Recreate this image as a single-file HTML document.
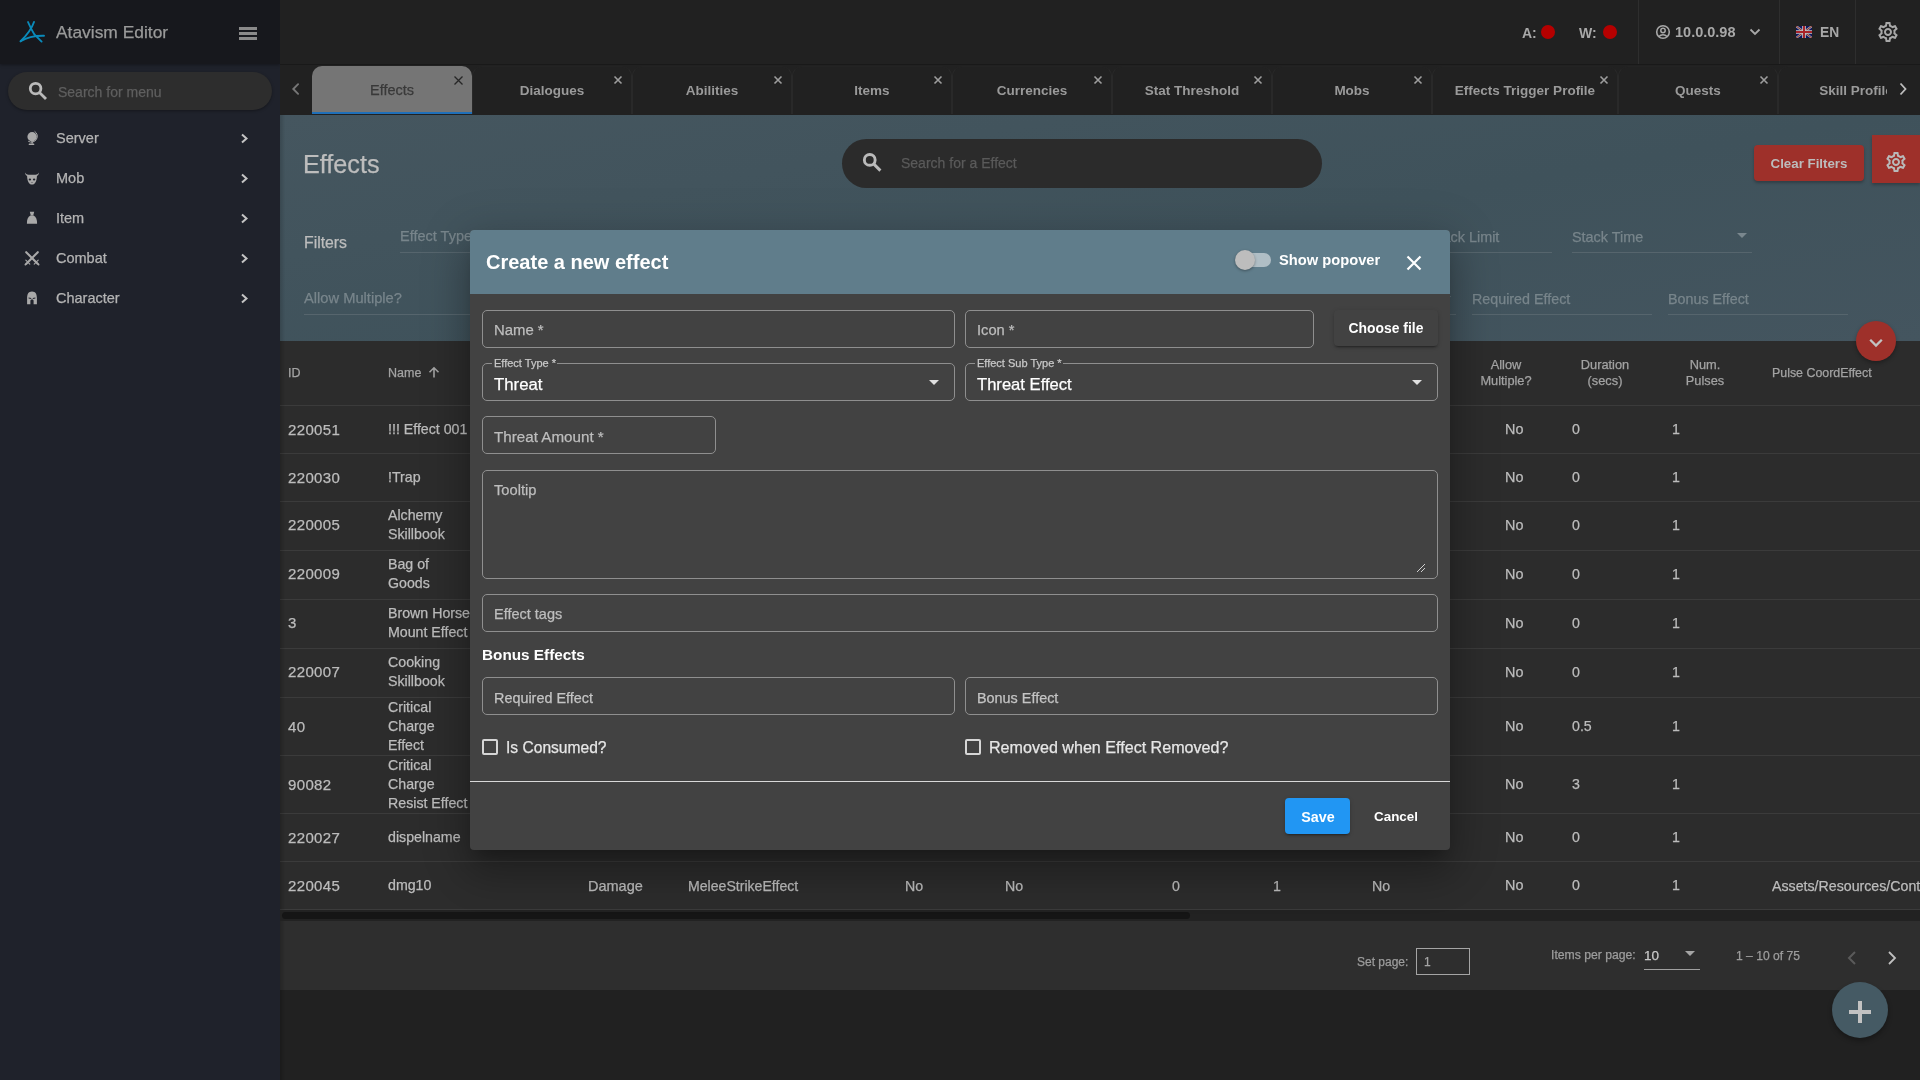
<!DOCTYPE html><html><head><meta charset="utf-8"><style>*{box-sizing:border-box;margin:0;padding:0}
html,body{width:1920px;height:1080px;overflow:hidden;background:#212121;font-family:"Liberation Sans",sans-serif}
.a{position:absolute}
.t{position:absolute;line-height:1;white-space:nowrap;will-change:transform;-webkit-text-stroke-width:.25px}
.t[style*="font-weight:700"]{-webkit-text-stroke-width:0}
</style></head><body><div class="a" style="left:0px;top:0px;width:280px;height:1080px;background:#1f222b"></div>
<div class="a" style="left:0px;top:0px;width:280px;height:64px;background:#17181d;box-shadow:0 1px 3px rgba(0,0,0,.35)"></div>
<svg class="a" style="left:16px;top:16px" width="32" height="32" viewBox="0 0 32 32"><g fill="none" stroke="#0a8aba" stroke-width="1.9" stroke-linecap="round"><path d="M12 6 Q 15 13 18.4 18.4 L 25.6 25.6"/><path d="M18 6 Q 15 15 4.6 25.2"/><path d="M4.6 25.2 Q 14 19.4 28 19.7"/></g></svg>
<div class="t" style="left:56px;top:24.47px;font-size:17.4px;color:#9a9a9a;font-weight:400;">Atavism Editor</div>
<div class="a" style="left:239px;top:27.2px;width:18.2px;height:2.5px;background:#8a8a8a"></div>
<div class="a" style="left:239px;top:32.2px;width:18.2px;height:2.5px;background:#8a8a8a"></div>
<div class="a" style="left:239px;top:37.2px;width:18.2px;height:2.5px;background:#8a8a8a"></div>
<div class="a" style="left:8px;top:71.5px;width:264px;height:38.5px;background:#2d2d2d;border-radius:20px;box-shadow:0 1px 3px rgba(0,0,0,.35)"></div>
<svg class="a" style="left:27px;top:80px" width="22" height="22" viewBox="0 0 22 22"><circle cx="8.6" cy="8.6" r="5.3" fill="none" stroke="#bababa" stroke-width="2.8"/><path d="M12.2 12.2 L19 19" stroke="#bababa" stroke-width="2.8"/></svg>
<div class="t" style="left:58.3px;top:85.15px;font-size:14px;color:#5f5f5f;font-weight:400;">Search for menu</div>
<div class="t" style="left:56px;top:130.73px;font-size:14.5px;color:#b4b4b4;font-weight:400;">Server</div>
<svg class="a" style="left:240px;top:133px" width="9" height="11" viewBox="0 0 9 11"><path d="M2 1.5 L6.5 5.5 L2 9.5" fill="none" stroke="#c4c4c4" stroke-width="2"/></svg>
<div class="t" style="left:56px;top:170.73px;font-size:14.5px;color:#b4b4b4;font-weight:400;">Mob</div>
<svg class="a" style="left:240px;top:173px" width="9" height="11" viewBox="0 0 9 11"><path d="M2 1.5 L6.5 5.5 L2 9.5" fill="none" stroke="#c4c4c4" stroke-width="2"/></svg>
<div class="t" style="left:56px;top:210.73px;font-size:14.5px;color:#b4b4b4;font-weight:400;">Item</div>
<svg class="a" style="left:240px;top:213px" width="9" height="11" viewBox="0 0 9 11"><path d="M2 1.5 L6.5 5.5 L2 9.5" fill="none" stroke="#c4c4c4" stroke-width="2"/></svg>
<div class="t" style="left:56px;top:250.73px;font-size:14.5px;color:#b4b4b4;font-weight:400;">Combat</div>
<svg class="a" style="left:240px;top:253px" width="9" height="11" viewBox="0 0 9 11"><path d="M2 1.5 L6.5 5.5 L2 9.5" fill="none" stroke="#c4c4c4" stroke-width="2"/></svg>
<div class="t" style="left:56px;top:290.73px;font-size:14.5px;color:#b4b4b4;font-weight:400;">Character</div>
<svg class="a" style="left:240px;top:293px" width="9" height="11" viewBox="0 0 9 11"><path d="M2 1.5 L6.5 5.5 L2 9.5" fill="none" stroke="#c4c4c4" stroke-width="2"/></svg>
<svg class="a" style="left:24px;top:128px" width="16" height="18" viewBox="0 0 16 18"><circle cx="8.1" cy="8.7" r="4.7" fill="#a9a9a9"/><path d="M10.6 3.3 A5.6 5.6 0 0 1 4.2 13.2" fill="none" stroke="#a9a9a9" stroke-width="1"/><rect x="7.5" y="13" width="1.3" height="2.6" fill="#a9a9a9"/><rect x="4.7" y="15.6" width="5.6" height="1.5" rx=".7" fill="#a9a9a9"/></svg>
<svg class="a" style="left:24px;top:171px" width="16" height="15" viewBox="0 0 16 15"><path d="M1 1.6 C1.3 4.2 2.6 5.3 4.2 5.3 L11.8 5.3 C13.4 5.3 14.7 4.2 15 1.6 C14 3.2 12.9 3.8 11.6 3.8 L4.4 3.8 C3.1 3.8 2 3.2 1 1.6 Z" fill="#a9a9a9"/><path d="M3.1 4.2 C3 9.5 4.8 13.6 8 13.6 C11.2 13.6 13 9.5 12.9 4.2 Z" fill="#a9a9a9"/><ellipse cx="5.9" cy="8.6" rx="1.2" ry="1" fill="#1f222b"/><ellipse cx="10.1" cy="8.6" rx="1.2" ry="1" fill="#1f222b"/><path d="M7.4 11 L8.6 11 L8 11.9 Z" fill="#1f222b"/></svg>
<svg class="a" style="left:26px;top:211px" width="12" height="14" viewBox="0 0 12 14"><path d="M3.8 0.8 L8.2 0.8 L7.2 4.6 L4.8 4.6 Z" fill="#a9a9a9"/><path d="M4.4 4.6 L7.6 4.6 C10.2 5.8 11.1 8.6 11.1 12.8 L0.9 12.8 C0.9 8.6 1.8 5.8 4.4 4.6 Z" fill="#a9a9a9"/></svg>
<svg class="a" style="left:24px;top:250px" width="16" height="16" viewBox="0 0 16 16"><g stroke="#a9a9a9" stroke-linecap="round"><path d="M2.6 13.4 L13.8 2.2" stroke-width="2.1"/><path d="M13.4 13.4 L2.2 2.2" stroke-width="2.1"/><path d="M1.8 10.2 L5.8 14.2 M10.2 14.2 L14.2 10.2" stroke-width="1.1"/><path d="M1.4 14.6 L2.4 13.6 M14.6 14.6 L13.6 13.6" stroke-width="1.8"/></g></svg>
<svg class="a" style="left:26px;top:290px" width="12" height="16" viewBox="0 0 12 16"><path d="M6 1.5 C9.6 1.5 10.9 4.3 10.9 8 L10.9 14.2 L7.6 14.2 L7.6 10.6 L6.9 9.6 L5.1 9.6 L4.4 10.6 L4.4 14.2 L1.1 14.2 L1.1 8 C1.1 4.3 2.4 1.5 6 1.5 Z" fill="#a9a9a9"/><path d="M2.6 7.4 L5.2 7.9 L5.2 9 L2.6 8.6 Z M9.4 7.4 L6.8 7.9 L6.8 9 L9.4 8.6 Z" fill="#1f222b"/></svg>
<div class="a" style="left:280px;top:0px;width:1640px;height:64px;background:#212121"></div>
<div class="a" style="left:280px;top:64px;width:1640px;height:1px;background:#191919"></div>
<div class="a" style="left:1638px;top:0px;width:1px;height:64px;background:#2e2e2e"></div>
<div class="a" style="left:1779px;top:0px;width:1px;height:64px;background:#2e2e2e"></div>
<div class="a" style="left:1855px;top:0px;width:1px;height:64px;background:#2e2e2e"></div>
<div class="t" style="left:1521.5px;top:25.55px;font-size:14px;color:#a8a8a8;font-weight:700;">A:</div>
<div class="a" style="left:1541px;top:25px;width:14px;height:14px;background:#b50000;border-radius:50%"></div>
<div class="t" style="left:1578.5px;top:25.55px;font-size:14px;color:#a8a8a8;font-weight:700;">W:</div>
<div class="a" style="left:1603px;top:25px;width:14px;height:14px;background:#b50000;border-radius:50%"></div>
<svg class="a" style="left:1655px;top:24px" width="16" height="16" viewBox="0 0 16 16"><circle cx="8" cy="8" r="6.3" fill="none" stroke="#a8a8a8" stroke-width="1.6"/><circle cx="8" cy="6.5" r="2.2" fill="none" stroke="#a8a8a8" stroke-width="1.5"/><path d="M4 12.5 C6 10 10 10 12 12.5" fill="none" stroke="#a8a8a8" stroke-width="1.5"/></svg>
<div class="t" style="left:1675px;top:25.33px;font-size:14.5px;color:#a8a8a8;font-weight:700;">10.0.0.98</div>
<svg class="a" style="left:1749px;top:28px" width="12" height="8" viewBox="0 0 12 8"><path d="M1.5 1.5 L6 6 L10.5 1.5" fill="none" stroke="#a8a8a8" stroke-width="1.8"/></svg>
<svg class="a" style="left:1796px;top:26px" width="16" height="12" viewBox="0 0 16 12"><rect width="16" height="12" fill="#0c1660"/><path d="M0 0 L16 12 M16 0 L0 12" stroke="#aaaaaa" stroke-width="2.2"/><path d="M0 0 L16 12 M16 0 L0 12" stroke="#8a2020" stroke-width=".9"/><path d="M8 0 V12 M0 6 H16" stroke="#c8c8c8" stroke-width="3.6"/><path d="M8 0 V12 M0 6 H16" stroke="#a8242a" stroke-width="2"/></svg>
<div class="t" style="left:1820px;top:25.92px;font-size:13.8px;color:#a8a8a8;font-weight:700;">EN</div>
<svg class="a" style="left:1876px;top:19.5px" width="24" height="24" viewBox="0 0 24 24"><path fill="#a8a8a8" d="M19.43 12.98c.04-.32.07-.64.07-.98 0-.34-.03-.66-.07-.98l2.11-1.65c.19-.15.24-.42.12-.64l-2-3.46a.5.5 0 0 0-.44-.25c-.06 0-.12.01-.17.03l-2.49 1c-.52-.4-1.08-.73-1.69-.98l-.38-2.65C14.46 2.18 14.25 2 14 2h-4c-.25 0-.46.18-.49.42l-.38 2.65c-.61.25-1.17.59-1.69.98l-2.49-1a.566.566 0 0 0-.18-.03c-.17 0-.34.09-.43.25l-2 3.46c-.13.22-.07.49.12.64l2.110 1.65c-.04.32-.07.65-.07.98 0 .33.03.66.07.98l-2.11 1.65c-.19.15-.24.42-.12.64l2 3.46a.5.5 0 0 0 .44.25c.06 0 .12-.01.17-.03l2.49-1c.52.4 1.08.73 1.69.98l.38 2.65c.03.24.24.42.49.42h4c.25 0 .46-.18.49-.42l.38-2.65c.61-.25 1.17-.59 1.69-.98l2.49 1c.06.02.12.03.18.03.17 0 .34-.09.43-.25l2-3.46c.12-.22.07-.49-.12-.64l-2.11-1.65zm-1.98-1.71c.04.31.05.52.05.73 0 .21-.02.43-.05.73l-.14 1.13.89.7 1.08.84-.7 1.21-1.27-.51-1.04-.42-.9.68c-.43.32-.84.56-1.25.73l-1.06.43-.16 1.13-.2 1.35h-1.4l-.19-1.35-.16-1.13-1.06-.43c-.43-.18-.83-.41-1.23-.71l-.91-.7-1.06.43-1.27.51-.7-1.21 1.08-.84.89-.7-.14-1.13c-.03-.31-.05-.54-.05-.74s.02-.43.05-.73l.14-1.13-.89-.7-1.08-.84.7-1.21 1.27.51 1.04.42.9-.68c.43-.32.84-.56 1.25-.73l1.06-.43.16-1.13.2-1.35h1.39l.19 1.35.16 1.13 1.06.43c.43.18.83.41 1.23.71l.91.7 1.06-.43 1.27-.51.7 1.21-1.07.85-.89.7.14 1.13zM12 8c-2.21 0-4 1.79-4 4s1.79 4 4 4 4-1.79 4-4-1.79-4-4-4zm0 6c-1.1 0-2-.9-2-2s.9-2 2-2 2 .9 2 2-.9 2-2 2z"/></svg>
<div class="a" style="left:280px;top:65px;width:1640px;height:50px;background:#212121"></div>
<div class="a" style="left:312px;top:66px;width:160px;height:48px;background:#757575;border-radius:10px 10px 0 0"></div>
<div class="a" style="left:312px;top:111.5px;width:160px;height:2.5px;background:#1f6fb8"></div>
<div class="t" style="left:92.0px;width:600px;text-align:center;top:83.23px;font-size:14.5px;color:#393939;font-weight:400;">Effects</div>
<svg class="a" style="left:453px;top:75px" width="11" height="11" viewBox="0 0 11 11"><path d="M1.5 1.5 L9.5 9.5 M9.5 1.5 L1.5 9.5" stroke="#262626" stroke-width="1.3"/></svg>
<div class="a" style="left:472px;top:66px;width:160px;height:48px;border:1px solid #292929;border-top-color:#232323;border-bottom:none;border-radius:10px 10px 0 0"></div>
<div class="t" style="left:252.0px;width:600px;text-align:center;top:83.87px;font-size:13.5px;color:#9a9a9a;font-weight:700;">Dialogues</div>
<svg class="a" style="left:613px;top:75px" width="10" height="10" viewBox="0 0 10 10"><path d="M1.5 1.5 L8.5 8.5 M8.5 1.5 L1.5 8.5" stroke="#9d9d9d" stroke-width="1.6"/></svg>
<div class="a" style="left:632px;top:66px;width:160px;height:48px;border:1px solid #292929;border-top-color:#232323;border-bottom:none;border-radius:10px 10px 0 0"></div>
<div class="t" style="left:412.0px;width:600px;text-align:center;top:83.87px;font-size:13.5px;color:#9a9a9a;font-weight:700;">Abilities</div>
<svg class="a" style="left:773px;top:75px" width="10" height="10" viewBox="0 0 10 10"><path d="M1.5 1.5 L8.5 8.5 M8.5 1.5 L1.5 8.5" stroke="#9d9d9d" stroke-width="1.6"/></svg>
<div class="a" style="left:792px;top:66px;width:160px;height:48px;border:1px solid #292929;border-top-color:#232323;border-bottom:none;border-radius:10px 10px 0 0"></div>
<div class="t" style="left:572.0px;width:600px;text-align:center;top:83.87px;font-size:13.5px;color:#9a9a9a;font-weight:700;">Items</div>
<svg class="a" style="left:933px;top:75px" width="10" height="10" viewBox="0 0 10 10"><path d="M1.5 1.5 L8.5 8.5 M8.5 1.5 L1.5 8.5" stroke="#9d9d9d" stroke-width="1.6"/></svg>
<div class="a" style="left:952px;top:66px;width:160px;height:48px;border:1px solid #292929;border-top-color:#232323;border-bottom:none;border-radius:10px 10px 0 0"></div>
<div class="t" style="left:732.0px;width:600px;text-align:center;top:83.87px;font-size:13.5px;color:#9a9a9a;font-weight:700;">Currencies</div>
<svg class="a" style="left:1093px;top:75px" width="10" height="10" viewBox="0 0 10 10"><path d="M1.5 1.5 L8.5 8.5 M8.5 1.5 L1.5 8.5" stroke="#9d9d9d" stroke-width="1.6"/></svg>
<div class="a" style="left:1112px;top:66px;width:160px;height:48px;border:1px solid #292929;border-top-color:#232323;border-bottom:none;border-radius:10px 10px 0 0"></div>
<div class="t" style="left:892.0px;width:600px;text-align:center;top:83.87px;font-size:13.5px;color:#9a9a9a;font-weight:700;">Stat Threshold</div>
<svg class="a" style="left:1253px;top:75px" width="10" height="10" viewBox="0 0 10 10"><path d="M1.5 1.5 L8.5 8.5 M8.5 1.5 L1.5 8.5" stroke="#9d9d9d" stroke-width="1.6"/></svg>
<div class="a" style="left:1272px;top:66px;width:160px;height:48px;border:1px solid #292929;border-top-color:#232323;border-bottom:none;border-radius:10px 10px 0 0"></div>
<div class="t" style="left:1052.0px;width:600px;text-align:center;top:83.87px;font-size:13.5px;color:#9a9a9a;font-weight:700;">Mobs</div>
<svg class="a" style="left:1413px;top:75px" width="10" height="10" viewBox="0 0 10 10"><path d="M1.5 1.5 L8.5 8.5 M8.5 1.5 L1.5 8.5" stroke="#9d9d9d" stroke-width="1.6"/></svg>
<div class="a" style="left:1432px;top:66px;width:186px;height:48px;border:1px solid #292929;border-top-color:#232323;border-bottom:none;border-radius:10px 10px 0 0"></div>
<div class="t" style="left:1225.0px;width:600px;text-align:center;top:83.87px;font-size:13.5px;color:#9a9a9a;font-weight:700;">Effects Trigger Profile</div>
<svg class="a" style="left:1599px;top:75px" width="10" height="10" viewBox="0 0 10 10"><path d="M1.5 1.5 L8.5 8.5 M8.5 1.5 L1.5 8.5" stroke="#9d9d9d" stroke-width="1.6"/></svg>
<div class="a" style="left:1618px;top:66px;width:160px;height:48px;border:1px solid #292929;border-top-color:#232323;border-bottom:none;border-radius:10px 10px 0 0"></div>
<div class="t" style="left:1398.0px;width:600px;text-align:center;top:83.87px;font-size:13.5px;color:#9a9a9a;font-weight:700;">Quests</div>
<svg class="a" style="left:1759px;top:75px" width="10" height="10" viewBox="0 0 10 10"><path d="M1.5 1.5 L8.5 8.5 M8.5 1.5 L1.5 8.5" stroke="#9d9d9d" stroke-width="1.6"/></svg>
<div class="a" style="left:1778px;top:66px;width:160px;height:48px;border:1px solid #292929;border-top-color:#232323;border-bottom:none;border-radius:10px 10px 0 0"></div>
<div class="t" style="left:1555.5px;width:600px;text-align:center;top:83.87px;font-size:13.5px;color:#9a9a9a;font-weight:700;">Skill Profile</div>
<svg class="a" style="left:1919px;top:75px" width="10" height="10" viewBox="0 0 10 10"><path d="M1.5 1.5 L8.5 8.5 M8.5 1.5 L1.5 8.5" stroke="#9d9d9d" stroke-width="1.6"/></svg>
<div class="a" style="left:1887px;top:65px;width:33px;height:49px;background:#212121"></div>
<svg class="a" style="left:291px;top:82px" width="10" height="14" viewBox="0 0 10 14"><path d="M7.1 2.2 L2.3 7 L7.1 11.8" fill="none" stroke="#767676" stroke-width="1.9" stroke-linecap="round"/></svg>
<svg class="a" style="left:1898px;top:82px" width="10" height="14" viewBox="0 0 10 14"><path d="M2.5 1.5 L7.5 7 L2.5 12.5" fill="none" stroke="#bdbdbd" stroke-width="1.8"/></svg>
<div class="a" style="left:280px;top:115px;width:1640px;height:226px;background:linear-gradient(170deg,#45565f 0%,#3f525b 55%,#44555f 100%)"></div>
<div class="a" style="left:280px;top:115px;width:5px;height:226px;background:linear-gradient(90deg,rgba(0,0,0,.15),rgba(0,0,0,0))"></div>
<div class="t" style="left:303px;top:152.27px;font-size:25.2px;color:#bdbdbd;font-weight:400;">Effects</div>
<div class="a" style="left:842px;top:139px;width:480px;height:48.5px;background:#2b2b2b;border-radius:25px"></div>
<svg class="a" style="left:861px;top:151px" width="22" height="22" viewBox="0 0 22 22"><circle cx="8.75" cy="8.9" r="5.4" fill="none" stroke="#bababa" stroke-width="2.9"/><path d="M12.4 12.6 L19.4 19.6" stroke="#bababa" stroke-width="2.9"/></svg>
<div class="t" style="left:900.6px;top:156.05px;font-size:14px;color:#5a5a5a;font-weight:400;">Search for a Effect</div>
<div class="a" style="left:1754px;top:145px;width:110px;height:36px;background:#9e302a;border-radius:4px;box-shadow:0 2px 3px rgba(0,0,0,.25)"></div>
<div class="t" style="left:1509px;width:600px;text-align:center;top:156.84px;font-size:13.3px;color:#bcbcbc;font-weight:700;">Clear Filters</div>
<div class="a" style="left:1872px;top:135px;width:48px;height:48px;background:#9e302a;box-shadow:0 2px 3px rgba(0,0,0,.25)"></div>
<svg class="a" style="left:1884px;top:149.5px" width="24" height="24" viewBox="0 0 24 24"><path fill="#b9b9b9" d="M19.43 12.98c.04-.32.07-.64.07-.98 0-.34-.03-.66-.07-.98l2.11-1.65c.19-.15.24-.42.12-.64l-2-3.46a.5.5 0 0 0-.44-.25c-.06 0-.12.01-.17.03l-2.49 1c-.52-.4-1.08-.73-1.69-.98l-.38-2.65C14.46 2.18 14.25 2 14 2h-4c-.25 0-.46.18-.49.42l-.38 2.65c-.61.25-1.17.59-1.69.98l-2.49-1a.566.566 0 0 0-.18-.03c-.17 0-.34.09-.43.25l-2 3.46c-.13.22-.07.49.12.64l2.110 1.65c-.04.32-.07.65-.07.98 0 .33.03.66.07.98l-2.11 1.65c-.19.15-.24.42-.12.64l2 3.46a.5.5 0 0 0 .44.25c.06 0 .12-.01.17-.03l2.49-1c.52.4 1.08.73 1.69.98l.38 2.65c.03.24.24.42.49.42h4c.25 0 .46-.18.49-.42l.38-2.65c.61-.25 1.17-.59 1.69-.98l2.49 1c.06.02.12.03.18.03.17 0 .34-.09.43-.25l2-3.46c.12-.22.07-.49-.12-.64l-2.11-1.65zm-1.98-1.71c.04.31.05.52.05.73 0 .21-.02.43-.05.73l-.14 1.13.89.7 1.08.84-.7 1.21-1.27-.51-1.04-.42-.9.68c-.43.32-.84.56-1.25.73l-1.06.43-.16 1.13-.2 1.35h-1.4l-.19-1.35-.16-1.13-1.06-.43c-.43-.18-.83-.41-1.23-.71l-.91-.7-1.06.43-1.27.51-.7-1.21 1.08-.84.89-.7-.14-1.13c-.03-.31-.05-.54-.05-.74s.02-.43.05-.73l.14-1.13-.89-.7-1.08-.84.7-1.21 1.27.51 1.04.42.9-.68c.43-.32.84-.56 1.25-.73l1.06-.43.16-1.13.2-1.35h1.39l.19 1.35.16 1.13 1.06.43c.43.18.83.41 1.23.71l.91.7 1.06-.43 1.27-.51.7 1.21-1.07.85-.89.7.14 1.13zM12 8c-2.21 0-4 1.79-4 4s1.79 4 4 4 4-1.79 4-4-1.79-4-4-4zm0 6c-1.1 0-2-.9-2-2s.9-2 2-2 2 .9 2 2-.9 2-2 2z"/></svg>
<div class="t" style="left:304px;top:235.03px;font-size:15.8px;color:#bdbdbd;font-weight:400;">Filters</div>
<div class="t" style="left:400.3px;top:228.73px;font-size:14.5px;color:#78858b;font-weight:400;">Effect Type</div>
<div class="a" style="left:400px;top:252px;width:180px;height:1px;background:#56656d"></div>
<div class="t" style="left:304px;top:291.31px;font-size:14.7px;color:#78858b;font-weight:400;">Allow Multiple?</div>
<div class="a" style="left:304px;top:314px;width:180px;height:1px;background:#56656d"></div>
<div class="t" style="left:1429px;top:229.56px;font-size:14.4px;color:#78858b;font-weight:400;">Stack Limit</div>
<div class="a" style="left:1372px;top:252px;width:180px;height:1px;background:#56656d"></div>
<div class="t" style="left:1572px;top:229.56px;font-size:14.4px;color:#78858b;font-weight:400;">Stack Time</div>
<div class="a" style="left:1572px;top:252px;width:180px;height:1px;background:#56656d"></div>
<svg class="a" style="left:1737px;top:233px" width="12" height="7" viewBox="0 0 12 7"><path d="M0 0 L10 0 L5 5 Z" fill="#7a878e"/></svg>
<div class="a" style="left:1276px;top:314px;width:180px;height:1px;background:#56656d"></div>
<svg class="a" style="left:1441px;top:296px" width="12" height="7" viewBox="0 0 12 7"><path d="M0 0 L10 0 L5 5 Z" fill="#7a878e"/></svg>
<div class="t" style="left:1472px;top:291.65px;font-size:14.3px;color:#78858b;font-weight:400;">Required Effect</div>
<div class="a" style="left:1472px;top:314px;width:180px;height:1px;background:#56656d"></div>
<div class="t" style="left:1668px;top:291.65px;font-size:14.3px;color:#78858b;font-weight:400;">Bonus Effect</div>
<div class="a" style="left:1668px;top:314px;width:180px;height:1px;background:#56656d"></div>
<div class="a" style="left:280px;top:341px;width:1640px;height:569px;background:#2c2c2c"></div>
<div class="a" style="left:280px;top:405px;width:1640px;height:1px;background:#3b3b3b"></div>
<div class="a" style="left:280px;top:453px;width:1640px;height:1px;background:#3b3b3b"></div>
<div class="a" style="left:280px;top:501px;width:1640px;height:1px;background:#3b3b3b"></div>
<div class="a" style="left:280px;top:550px;width:1640px;height:1px;background:#3b3b3b"></div>
<div class="a" style="left:280px;top:599px;width:1640px;height:1px;background:#3b3b3b"></div>
<div class="a" style="left:280px;top:648px;width:1640px;height:1px;background:#3b3b3b"></div>
<div class="a" style="left:280px;top:697px;width:1640px;height:1px;background:#3b3b3b"></div>
<div class="a" style="left:280px;top:755px;width:1640px;height:1px;background:#3b3b3b"></div>
<div class="a" style="left:280px;top:813px;width:1640px;height:1px;background:#3b3b3b"></div>
<div class="a" style="left:280px;top:861px;width:1640px;height:1px;background:#3b3b3b"></div>
<div class="a" style="left:280px;top:909px;width:1640px;height:1px;background:#3b3b3b"></div>
<div class="a" style="left:280px;top:341px;width:5px;height:580px;background:linear-gradient(90deg,rgba(0,0,0,.18),rgba(0,0,0,0))"></div>
<div class="t" style="left:288px;top:366.62px;font-size:12.5px;color:#a3a3a3;font-weight:400;">ID</div>
<div class="t" style="left:388px;top:366.62px;font-size:12.5px;color:#a3a3a3;font-weight:400;">Name</div>
<svg class="a" style="left:428px;top:366px" width="12" height="12" viewBox="0 0 12 12"><path d="M6 11.5 V1.8 M1.5 6.2 L6 1.8 L10.5 6.2" fill="none" stroke="#a3a3a3" stroke-width="1.6"/></svg>
<div class="t" style="left:1205.5px;width:600px;text-align:center;top:358.56px;font-size:12.8px;color:#a3a3a3;font-weight:400;">Allow</div>
<div class="t" style="left:1205.5px;width:600px;text-align:center;top:375.46px;font-size:12.8px;color:#a3a3a3;font-weight:400;">Multiple?</div>
<div class="t" style="left:1305px;width:600px;text-align:center;top:358.56px;font-size:12.8px;color:#a3a3a3;font-weight:400;">Duration</div>
<div class="t" style="left:1305px;width:600px;text-align:center;top:375.46px;font-size:12.8px;color:#a3a3a3;font-weight:400;">(secs)</div>
<div class="t" style="left:1405px;width:600px;text-align:center;top:358.56px;font-size:12.8px;color:#a3a3a3;font-weight:400;">Num.</div>
<div class="t" style="left:1405px;width:600px;text-align:center;top:375.46px;font-size:12.8px;color:#a3a3a3;font-weight:400;">Pulses</div>
<div class="t" style="left:1772.2px;top:366.70px;font-size:12.4px;color:#a3a3a3;font-weight:400;">Pulse CoordEffect</div>
<div class="t" style="left:287.5px;top:421.80px;font-size:15px;color:#bcbcbc;font-weight:400;letter-spacing:.35px">220051</div>
<div class="t" style="left:388px;top:422.48px;font-size:14.2px;color:#bcbcbc;font-weight:400;">!!! Effect 001</div>
<div class="t" style="left:1504.5px;top:422.31px;font-size:14.4px;color:#bcbcbc;font-weight:400;">No</div>
<div class="t" style="left:1572px;top:422.48px;font-size:14.2px;color:#bcbcbc;font-weight:400;">0</div>
<div class="t" style="left:1672px;top:422.48px;font-size:14.2px;color:#bcbcbc;font-weight:400;">1</div>
<div class="t" style="left:287.5px;top:469.80px;font-size:15px;color:#bcbcbc;font-weight:400;letter-spacing:.35px">220030</div>
<div class="t" style="left:388px;top:470.48px;font-size:14.2px;color:#bcbcbc;font-weight:400;">!Trap</div>
<div class="t" style="left:1504.5px;top:470.31px;font-size:14.4px;color:#bcbcbc;font-weight:400;">No</div>
<div class="t" style="left:1572px;top:470.48px;font-size:14.2px;color:#bcbcbc;font-weight:400;">0</div>
<div class="t" style="left:1672px;top:470.48px;font-size:14.2px;color:#bcbcbc;font-weight:400;">1</div>
<div class="t" style="left:287.5px;top:517.30px;font-size:15px;color:#bcbcbc;font-weight:400;letter-spacing:.35px">220005</div>
<div class="t" style="left:388px;top:508.48px;font-size:14.2px;color:#bcbcbc;font-weight:400;">Alchemy</div>
<div class="t" style="left:388px;top:527.48px;font-size:14.2px;color:#bcbcbc;font-weight:400;">Skillbook</div>
<div class="t" style="left:1504.5px;top:517.81px;font-size:14.4px;color:#bcbcbc;font-weight:400;">No</div>
<div class="t" style="left:1572px;top:517.98px;font-size:14.2px;color:#bcbcbc;font-weight:400;">0</div>
<div class="t" style="left:1672px;top:517.98px;font-size:14.2px;color:#bcbcbc;font-weight:400;">1</div>
<div class="t" style="left:287.5px;top:566.30px;font-size:15px;color:#bcbcbc;font-weight:400;letter-spacing:.35px">220009</div>
<div class="t" style="left:388px;top:557.48px;font-size:14.2px;color:#bcbcbc;font-weight:400;">Bag of</div>
<div class="t" style="left:388px;top:576.48px;font-size:14.2px;color:#bcbcbc;font-weight:400;">Goods</div>
<div class="t" style="left:1504.5px;top:566.81px;font-size:14.4px;color:#bcbcbc;font-weight:400;">No</div>
<div class="t" style="left:1572px;top:566.98px;font-size:14.2px;color:#bcbcbc;font-weight:400;">0</div>
<div class="t" style="left:1672px;top:566.98px;font-size:14.2px;color:#bcbcbc;font-weight:400;">1</div>
<div class="t" style="left:287.5px;top:615.30px;font-size:15px;color:#bcbcbc;font-weight:400;letter-spacing:.35px">3</div>
<div class="t" style="left:388px;top:606.48px;font-size:14.2px;color:#bcbcbc;font-weight:400;">Brown Horse</div>
<div class="t" style="left:388px;top:625.48px;font-size:14.2px;color:#bcbcbc;font-weight:400;">Mount Effect</div>
<div class="t" style="left:1504.5px;top:615.81px;font-size:14.4px;color:#bcbcbc;font-weight:400;">No</div>
<div class="t" style="left:1572px;top:615.98px;font-size:14.2px;color:#bcbcbc;font-weight:400;">0</div>
<div class="t" style="left:1672px;top:615.98px;font-size:14.2px;color:#bcbcbc;font-weight:400;">1</div>
<div class="t" style="left:287.5px;top:664.30px;font-size:15px;color:#bcbcbc;font-weight:400;letter-spacing:.35px">220007</div>
<div class="t" style="left:388px;top:655.48px;font-size:14.2px;color:#bcbcbc;font-weight:400;">Cooking</div>
<div class="t" style="left:388px;top:674.48px;font-size:14.2px;color:#bcbcbc;font-weight:400;">Skillbook</div>
<div class="t" style="left:1504.5px;top:664.81px;font-size:14.4px;color:#bcbcbc;font-weight:400;">No</div>
<div class="t" style="left:1572px;top:664.98px;font-size:14.2px;color:#bcbcbc;font-weight:400;">0</div>
<div class="t" style="left:1672px;top:664.98px;font-size:14.2px;color:#bcbcbc;font-weight:400;">1</div>
<div class="t" style="left:287.5px;top:718.80px;font-size:15px;color:#bcbcbc;font-weight:400;letter-spacing:.35px">40</div>
<div class="t" style="left:388px;top:700.48px;font-size:14.2px;color:#bcbcbc;font-weight:400;">Critical</div>
<div class="t" style="left:388px;top:719.48px;font-size:14.2px;color:#bcbcbc;font-weight:400;">Charge</div>
<div class="t" style="left:388px;top:738.48px;font-size:14.2px;color:#bcbcbc;font-weight:400;">Effect</div>
<div class="t" style="left:1504.5px;top:719.31px;font-size:14.4px;color:#bcbcbc;font-weight:400;">No</div>
<div class="t" style="left:1572px;top:719.48px;font-size:14.2px;color:#bcbcbc;font-weight:400;">0.5</div>
<div class="t" style="left:1672px;top:719.48px;font-size:14.2px;color:#bcbcbc;font-weight:400;">1</div>
<div class="t" style="left:287.5px;top:776.80px;font-size:15px;color:#bcbcbc;font-weight:400;letter-spacing:.35px">90082</div>
<div class="t" style="left:388px;top:758.48px;font-size:14.2px;color:#bcbcbc;font-weight:400;">Critical</div>
<div class="t" style="left:388px;top:777.48px;font-size:14.2px;color:#bcbcbc;font-weight:400;">Charge</div>
<div class="t" style="left:388px;top:796.48px;font-size:14.2px;color:#bcbcbc;font-weight:400;">Resist Effect</div>
<div class="t" style="left:1504.5px;top:777.31px;font-size:14.4px;color:#bcbcbc;font-weight:400;">No</div>
<div class="t" style="left:1572px;top:777.48px;font-size:14.2px;color:#bcbcbc;font-weight:400;">3</div>
<div class="t" style="left:1672px;top:777.48px;font-size:14.2px;color:#bcbcbc;font-weight:400;">1</div>
<div class="t" style="left:287.5px;top:829.80px;font-size:15px;color:#bcbcbc;font-weight:400;letter-spacing:.35px">220027</div>
<div class="t" style="left:388px;top:830.48px;font-size:14.2px;color:#bcbcbc;font-weight:400;">dispelname</div>
<div class="t" style="left:1504.5px;top:830.31px;font-size:14.4px;color:#bcbcbc;font-weight:400;">No</div>
<div class="t" style="left:1572px;top:830.48px;font-size:14.2px;color:#bcbcbc;font-weight:400;">0</div>
<div class="t" style="left:1672px;top:830.48px;font-size:14.2px;color:#bcbcbc;font-weight:400;">1</div>
<div class="t" style="left:287.5px;top:877.80px;font-size:15px;color:#bcbcbc;font-weight:400;letter-spacing:.35px">220045</div>
<div class="t" style="left:388px;top:878.48px;font-size:14.2px;color:#bcbcbc;font-weight:400;">dmg10</div>
<div class="t" style="left:1504.5px;top:878.31px;font-size:14.4px;color:#bcbcbc;font-weight:400;">No</div>
<div class="t" style="left:1572px;top:878.48px;font-size:14.2px;color:#bcbcbc;font-weight:400;">0</div>
<div class="t" style="left:1672px;top:878.48px;font-size:14.2px;color:#bcbcbc;font-weight:400;">1</div>
<div class="t" style="left:588px;top:878.53px;font-size:14.5px;color:#bcbcbc;font-weight:400;">Damage</div>
<div class="t" style="left:688px;top:878.86px;font-size:14.1px;color:#bcbcbc;font-weight:400;">MeleeStrikeEffect</div>
<div class="t" style="left:904.9px;top:878.78px;font-size:14.2px;color:#bcbcbc;font-weight:400;">No</div>
<div class="t" style="left:1004.6px;top:878.78px;font-size:14.2px;color:#bcbcbc;font-weight:400;">No</div>
<div class="t" style="left:1171.9px;top:878.78px;font-size:14.2px;color:#bcbcbc;font-weight:400;">0</div>
<div class="t" style="left:1272.7px;top:878.78px;font-size:14.2px;color:#bcbcbc;font-weight:400;">1</div>
<div class="t" style="left:1372px;top:878.78px;font-size:14.2px;color:#bcbcbc;font-weight:400;">No</div>
<div class="t" style="left:1772px;top:878.78px;font-size:14.2px;color:#bcbcbc;font-weight:400;">Assets/Resources/Content</div>
<div class="a" style="left:280px;top:910px;width:1640px;height:11px;background:#222222"></div>
<div class="a" style="left:282px;top:912px;width:908px;height:7px;background:#151515;border-radius:4px"></div>
<div class="a" style="left:280px;top:921px;width:1640px;height:69px;background:#2e2e2e"></div>
<div class="t" style="left:1356.8px;top:956.04px;font-size:12px;color:#9d9d9d;font-weight:400;">Set page:</div>
<div class="a" style="left:1416px;top:947.5px;width:54px;height:27px;border:1px solid #a5a5a5"></div>
<div class="t" style="left:1424px;top:955.84px;font-size:12px;color:#a5a5a5;font-weight:400;">1</div>
<div class="t" style="left:1551.2px;top:949.37px;font-size:12.2px;color:#9d9d9d;font-weight:400;">Items per page:</div>
<div class="t" style="left:1643.8px;top:948.87px;font-size:13.5px;color:#c9c9c9;font-weight:400;">10</div>
<svg class="a" style="left:1685px;top:951px" width="12" height="7" viewBox="0 0 12 7"><path d="M0 0 L10 0 L5 5 Z" fill="#a5a5a5"/></svg>
<div class="a" style="left:1644px;top:968.5px;width:56px;height:1px;background:#a0a0a0"></div>
<div class="t" style="left:1735.9px;top:950.16px;font-size:12.1px;color:#9d9d9d;font-weight:400;">1 – 10 of 75</div>
<svg class="a" style="left:1846.3px;top:950px" width="12" height="16" viewBox="0 0 12 16"><path d="M9 2 L3 8 L9 14" fill="none" stroke="#5a5a5a" stroke-width="2"/></svg>
<svg class="a" style="left:1886px;top:950px" width="12" height="16" viewBox="0 0 12 16"><path d="M3 2 L9 8 L3 14" fill="none" stroke="#c0c0c0" stroke-width="1.8"/></svg>
<div class="a" style="left:1832px;top:982px;width:56px;height:56px;background:#455a64;border-radius:50%;box-shadow:0 3px 5px rgba(0,0,0,.3)"></div>
<div class="a" style="left:1849px;top:1010.4px;width:22px;height:3.6px;background:#c2c2c2"></div>
<div class="a" style="left:1858.2px;top:1001.2px;width:3.6px;height:22px;background:#c2c2c2"></div>
<div class="a" style="left:1856px;top:321px;width:40px;height:40px;background:#9e302a;border-radius:50%;box-shadow:0 2px 4px rgba(0,0,0,.3)"></div>
<svg class="a" style="left:1868px;top:336.5px" width="16" height="12" viewBox="0 0 16 12"><path d="M2.2 2.8 L8 8.6 L13.8 2.8" fill="none" stroke="#c2c2c2" stroke-width="2.3"/></svg>
<div class="a" style="left:280px;top:921px;width:5px;height:159px;background:linear-gradient(90deg,rgba(0,0,0,.18),rgba(0,0,0,0))"></div>
<div class="a" style="left:470px;top:230px;width:980px;height:620px;background:#424242;border-radius:4px;box-shadow:0 11px 15px -7px rgba(0,0,0,.25),0 24px 38px 3px rgba(0,0,0,.18),0 9px 46px 8px rgba(0,0,0,.15)"></div>
<div class="a" style="left:470px;top:230px;width:980px;height:64px;background:#607d8b;border-radius:4px 4px 0 0"></div>
<div class="t" style="left:486px;top:251.87px;font-size:20px;color:#ffffff;font-weight:700;">Create a new effect</div>
<div class="a" style="left:1240px;top:253px;width:31px;height:14px;background:#b0bec5;border-radius:7px"></div>
<div class="a" style="left:1235px;top:250px;width:20px;height:20px;background:#bdbdbd;border-radius:50%;box-shadow:0 1px 3px rgba(0,0,0,.35)"></div>
<div class="t" style="left:1279px;top:252.56px;font-size:14.7px;color:#ffffff;font-weight:700;">Show popover</div>
<svg class="a" style="left:1405px;top:253.5px" width="18" height="18" viewBox="0 0 18 18"><path d="M2.5 2.5 L15.5 15.5 M15.5 2.5 L2.5 15.5" stroke="#fff" stroke-width="2.2"/></svg>
<div class="a" style="left:482px;top:310px;width:473px;height:38px;border:1px solid #8f8f8f;border-radius:5px"></div>
<div class="t" style="left:493.8px;top:322.89px;font-size:14.9px;color:#bdbdbd;font-weight:400;">Name *</div>
<div class="a" style="left:965px;top:310px;width:349px;height:38px;border:1px solid #8f8f8f;border-radius:5px"></div>
<div class="t" style="left:977px;top:322.86px;font-size:14.7px;color:#bdbdbd;font-weight:400;">Icon *</div>
<div class="a" style="left:1334px;top:310px;width:104px;height:36px;background:#424242;border-radius:4px;box-shadow:0 3px 1px -2px rgba(0,0,0,.2),0 2px 2px 0 rgba(0,0,0,.14),0 1px 5px 0 rgba(0,0,0,.12)"></div>
<div class="t" style="left:1086px;width:600px;text-align:center;top:322.03px;font-size:13.9px;color:#ffffff;font-weight:700;">Choose file</div>
<div class="a" style="left:482px;top:363px;width:473px;height:38px;border:1px solid #8f8f8f;border-radius:5px"></div>
<div class="a" style="left:492px;top:360px;width:65px;height:6px;background:#424242"></div>
<div class="t" style="left:494px;top:358.09px;font-size:11px;color:#c8c8c8;font-weight:400;">Effect Type *</div>
<div class="t" style="left:494px;top:376.78px;font-size:16.8px;color:#ffffff;font-weight:400;">Threat</div>
<svg class="a" style="left:928.5px;top:379.5px" width="12" height="7" viewBox="0 0 12 7"><path d="M0 0 L10 0 L5 5 Z" fill="#e0e0e0"/></svg>
<div class="a" style="left:965px;top:363px;width:473px;height:38px;border:1px solid #8f8f8f;border-radius:5px"></div>
<div class="a" style="left:975px;top:360px;width:88px;height:6px;background:#424242"></div>
<div class="t" style="left:977px;top:358.09px;font-size:11px;color:#c8c8c8;font-weight:400;">Effect Sub Type *</div>
<div class="t" style="left:977px;top:376.95px;font-size:16.6px;color:#ffffff;font-weight:400;">Threat Effect</div>
<svg class="a" style="left:1411.5px;top:379.5px" width="12" height="7" viewBox="0 0 12 7"><path d="M0 0 L10 0 L5 5 Z" fill="#e0e0e0"/></svg>
<div class="a" style="left:482px;top:416px;width:234px;height:38px;border:1px solid #8f8f8f;border-radius:5px"></div>
<div class="t" style="left:493.5px;top:429.43px;font-size:15.2px;color:#bdbdbd;font-weight:400;">Threat Amount *</div>
<div class="a" style="left:482px;top:469.5px;width:956px;height:109.5px;border:1px solid #8f8f8f;border-radius:5px"></div>
<div class="t" style="left:494px;top:482.86px;font-size:14.7px;color:#bdbdbd;font-weight:400;">Tooltip</div>
<svg class="a" style="left:1415px;top:562px" width="12" height="12" viewBox="0 0 12 12"><path d="M2 10 L10 2 M6 10 L10 6" stroke="#d0d0d0" stroke-width="1"/></svg>
<div class="a" style="left:482px;top:594px;width:956px;height:38px;border:1px solid #8f8f8f;border-radius:5px"></div>
<div class="t" style="left:494px;top:606.73px;font-size:14.5px;color:#bdbdbd;font-weight:400;">Effect tags</div>
<div class="t" style="left:482.2px;top:647.05px;font-size:15.3px;color:#ffffff;font-weight:700;">Bonus Effects</div>
<div class="a" style="left:482px;top:677px;width:473px;height:38px;border:1px solid #8f8f8f;border-radius:5px"></div>
<div class="t" style="left:494.1px;top:690.81px;font-size:14.4px;color:#c4c4c4;font-weight:400;">Required Effect</div>
<div class="a" style="left:965px;top:677px;width:473px;height:38px;border:1px solid #8f8f8f;border-radius:5px"></div>
<div class="t" style="left:977px;top:690.81px;font-size:14.4px;color:#c4c4c4;font-weight:400;">Bonus Effect</div>
<div class="a" style="left:482px;top:739px;width:16px;height:16px;border:2px solid #d6d6d6;border-radius:2px"></div>
<div class="t" style="left:506.3px;top:739.99px;font-size:15.6px;color:#e6e6e6;font-weight:400;">Is Consumed?</div>
<div class="a" style="left:965px;top:739px;width:16px;height:16px;border:2px solid #d6d6d6;border-radius:2px"></div>
<div class="t" style="left:989px;top:738.77px;font-size:16.1px;color:#e6e6e6;font-weight:400;">Removed when Effect Removed?</div>
<div class="a" style="left:470px;top:781px;width:980px;height:1px;background:#d9d9d9"></div>
<div class="a" style="left:1285px;top:798px;width:65px;height:36px;background:#2196f3;border-radius:4px;box-shadow:0 3px 1px -2px rgba(0,0,0,.2),0 2px 2px 0 rgba(0,0,0,.14),0 1px 5px 0 rgba(0,0,0,.12)"></div>
<div class="t" style="left:1017.5px;width:600px;text-align:center;top:809.50px;font-size:14.3px;color:#ffffff;font-weight:700;">Save</div>
<div class="t" style="left:1095.8px;width:600px;text-align:center;top:809.76px;font-size:13.4px;color:#ffffff;font-weight:700;">Cancel</div></body></html>
